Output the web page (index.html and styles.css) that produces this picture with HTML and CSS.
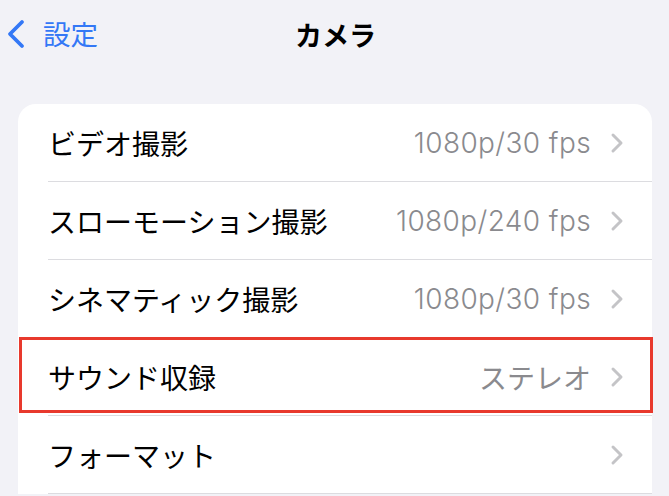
FILE: index.html
```html
<!DOCTYPE html>
<html lang="ja">
<head>
<meta charset="utf-8">
<link rel="stylesheet" href="styles.css">
</head>
<body>
<header class="nav">
  <div class="nav-back">
    <svg class="back-icon" width="22" height="32" viewBox="0 0 22 32"><path d="M17 4 L5 16 L17 28" fill="none" stroke="#3478f6" stroke-width="3.8" stroke-linecap="round" stroke-linejoin="round"/></svg>
    <span class="back-label">設定</span>
  </div>
  <div class="nav-title">カメラ</div>
  <div class="nav-spacer"></div>
</header>
<section class="card">
  <div class="row">
    <span class="label">ビデオ撮影</span>
    <span class="value">1080p/30 fps</span>
    <svg class="chev" width="14" height="22" viewBox="0 0 14 22"><path d="M3 3 L11 11 L3 19" fill="none" stroke="#c4c4c7" stroke-width="3" stroke-linecap="round" stroke-linejoin="round"/></svg>
  </div>
  <div class="row">
    <span class="label">スローモーション撮影</span>
    <span class="value">1080p/240 fps</span>
    <svg class="chev" width="14" height="22" viewBox="0 0 14 22"><path d="M3 3 L11 11 L3 19" fill="none" stroke="#c4c4c7" stroke-width="3" stroke-linecap="round" stroke-linejoin="round"/></svg>
  </div>
  <div class="row">
    <span class="label">シネマティック撮影</span>
    <span class="value">1080p/30 fps</span>
    <svg class="chev" width="14" height="22" viewBox="0 0 14 22"><path d="M3 3 L11 11 L3 19" fill="none" stroke="#c4c4c7" stroke-width="3" stroke-linecap="round" stroke-linejoin="round"/></svg>
  </div>
  <div class="row highlight">
    <span class="label">サウンド収録</span>
    <span class="value jp">ステレオ</span>
    <svg class="chev" width="14" height="22" viewBox="0 0 14 22"><path d="M3 3 L11 11 L3 19" fill="none" stroke="#c4c4c7" stroke-width="3" stroke-linecap="round" stroke-linejoin="round"/></svg>
  </div>
  <div class="row">
    <span class="label">フォーマット</span>
    <span class="value"></span>
    <svg class="chev" width="14" height="22" viewBox="0 0 14 22"><path d="M3 3 L11 11 L3 19" fill="none" stroke="#c4c4c7" stroke-width="3" stroke-linecap="round" stroke-linejoin="round"/></svg>
  </div>
</section>
</body>
</html>
```
FILE: styles.css
```css
* { box-sizing: border-box; }
html, body { margin: 0; padding: 0; }
body {
  background: #f2f2f7;
  font-family: "Inter", "Noto Sans CJK JP", sans-serif;
  color: #000;
  width: 669px;
  height: 496px;
  overflow: hidden;
}
.nav {
  display: grid;
  grid-template-columns: 1fr auto 1fr;
  align-items: center;
  height: 68px;
  padding: 0 0 0 5px;
  margin-bottom: 36px;
}
.nav-back {
  display: flex;
  align-items: center;
  gap: 16px;
  color: #3478f6;
}
.back-icon { display: block; }
.back-label {
  font-family: "Noto Sans CJK JP", sans-serif;
  font-size: 27.5px;
  line-height: 1;
}
.nav-title {
  font-family: "Noto Sans CJK JP", sans-serif;
  font-weight: 700;
  font-size: 27px;
  line-height: 1;
  margin-right: 3px;
}
.card {
  margin: 0 17px 0 18px;
  background: #fff;
  border-radius: 18px 18px 0 0;
}
.row {
  position: relative;
  display: flex;
  align-items: center;
  height: 78px;
  margin-left: 30px;
  padding-right: 28px;
  border-bottom: 1px solid #dcdce0;
}
.label {
  flex: 1;
  font-family: "Noto Sans CJK JP", sans-serif;
  font-size: 28px;
  line-height: 1;
}
.value {
  color: #8a8a8e;
  font-size: 28px;
  font-weight: 300;
  letter-spacing: 0.4px;
  line-height: 1;
  margin-right: 19px;
}
.value.jp { font-family: "Noto Sans CJK JP", sans-serif; font-weight: 400; letter-spacing: 0; }
.chev { display: block; }
.highlight::after {
  content: "";
  position: absolute;
  left: -29px;
  right: -1px;
  top: -1px;
  bottom: 2px;
  border: 3px solid #e8392d;
  pointer-events: none;
}
```
